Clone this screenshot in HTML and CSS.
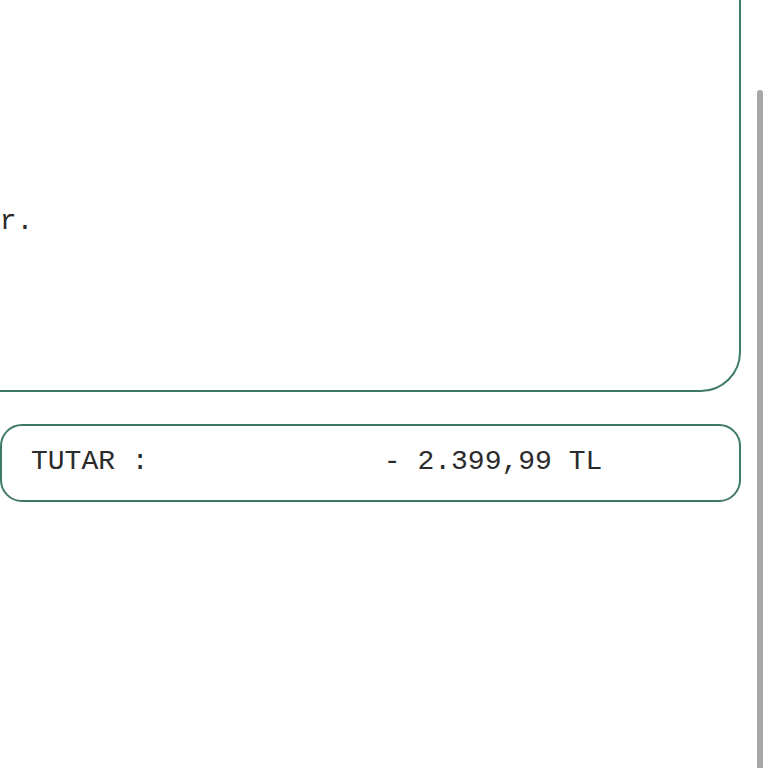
FILE: index.html
```html
<!DOCTYPE html>
<html lang="tr">
<head>
<meta charset="utf-8">
<title>Tutar</title>
<link rel="stylesheet" href="styles.css">
</head>
<body>
<main class="page">
  <section class="card">
    <p class="card-text">İade işlemi yapılmıştır.</p>
  </section>
  <section class="total">
    <span class="total-label">TUTAR :</span>
    <span class="total-amount">- 2.399,99 TL</span>
  </section>
</main>
<div class="scrollbar"><div class="thumb"></div></div>
</body>
</html>
```
FILE: styles.css
```css
html, body {
  margin: 0;
  padding: 0;
  background: #ffffff;
  overflow: hidden;
  height: 768px;
}

.page {
  display: flex;
  flex-direction: column;
  gap: 32px;
  width: 741px;
  font-family: "Liberation Mono", "Courier New", monospace;
  font-size: 28px;
  line-height: 32px;
  color: #2b2b2b;
}

.card {
  margin: -60px 0 0 -404px;
  border: 2px solid #3f7a69;
  border-radius: 40px;
  padding: 264px 32px 152px 32px;
}

.card-text {
  margin: 0;
  white-space: nowrap;
}

.total {
  display: flex;
  border: 2px solid #3f7a69;
  border-radius: 22px;
  padding: 20px 29px 22px 29px;
  white-space: pre;
}

.total-label {
  width: 21ch;
  flex: none;
}

.scrollbar {
  position: absolute;
  top: 0;
  right: 0;
  width: 12px;
  height: 768px;
}

.thumb {
  position: absolute;
  left: 1px;
  top: 90px;
  width: 6px;
  bottom: 0;
  background: #a8a8a8;
  border-radius: 3px 3px 0 0;
}
```
